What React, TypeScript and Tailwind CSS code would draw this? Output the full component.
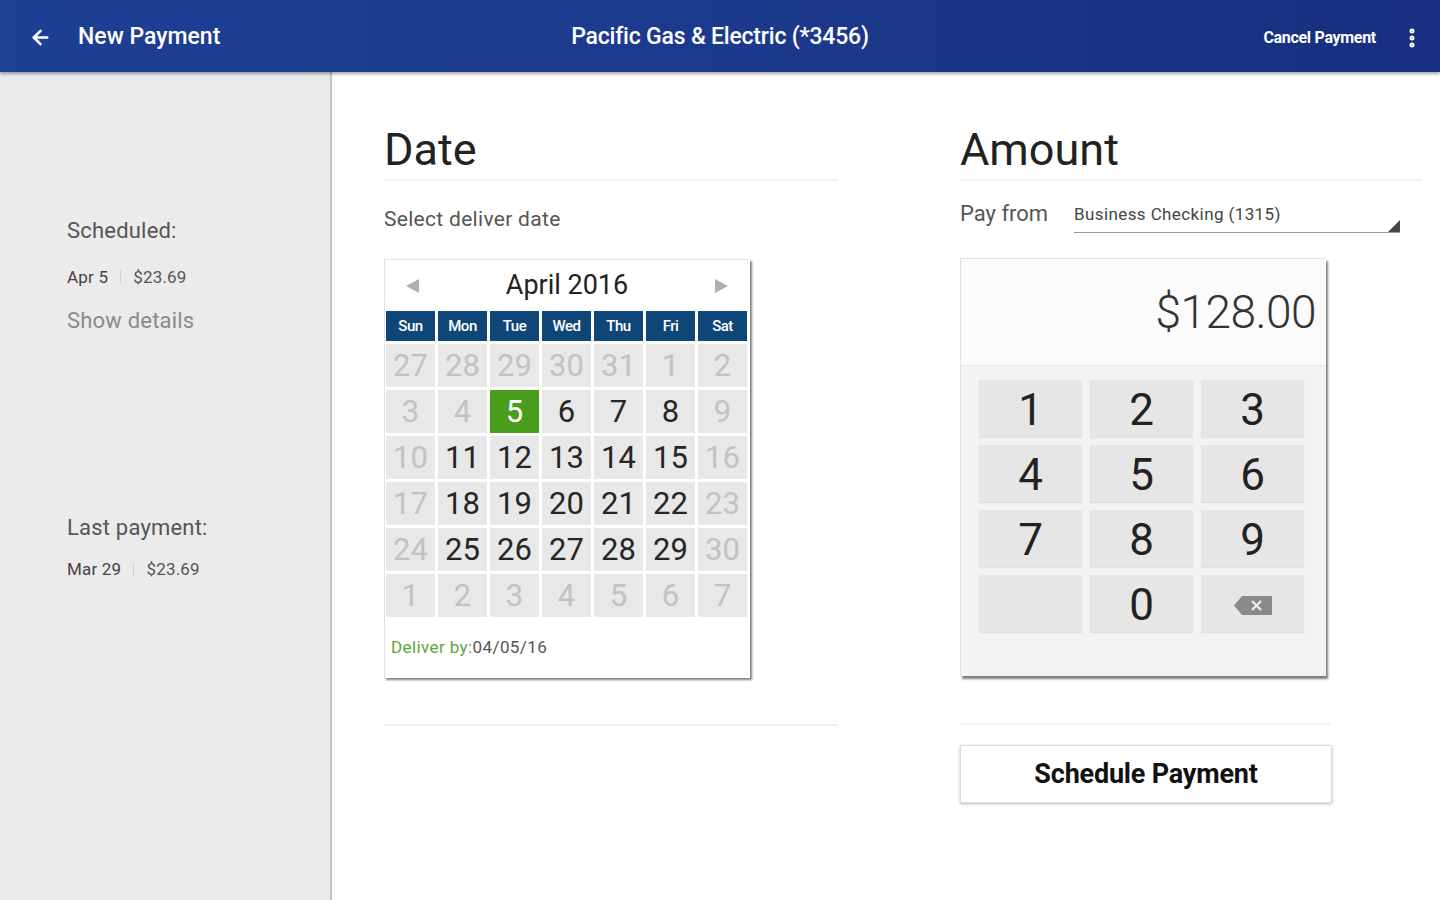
import React from "react";
import { ArrowLeft, EllipsisVertical } from "lucide-react";

const font = { fontFamily: "Roboto, 'Noto Sans', 'Liberation Sans', sans-serif" };

type Day = { n: number; on: boolean; sel?: boolean };

const rows: Day[][] = [
  [27, 28, 29, 30, 31, 1, 2].map((n) => ({ n, on: false })),
  [
    { n: 3, on: false },
    { n: 4, on: false },
    { n: 5, on: true, sel: true },
    { n: 6, on: true },
    { n: 7, on: true },
    { n: 8, on: true },
    { n: 9, on: false },
  ],
  [10, 11, 12, 13, 14, 15, 16].map((n, i) => ({ n, on: i > 0 && i < 6 })),
  [17, 18, 19, 20, 21, 22, 23].map((n, i) => ({ n, on: i > 0 && i < 6 })),
  [24, 25, 26, 27, 28, 29, 30].map((n, i) => ({ n, on: i > 0 && i < 6 })),
  [1, 2, 3, 4, 5, 6, 7].map((n) => ({ n, on: false })),
];

const dayNames = ["Sun", "Mon", "Tue", "Wed", "Thu", "Fri", "Sat"];

function Calendar() {
  return (
    <div className="mt-[26px] w-[366px] bg-white border-t border-l border-[#e2e2e2] shadow-[2px_2px_2px_rgba(0,0,0,0.5)] pl-[1px]">
      <div className="h-[51px] flex items-center justify-between pl-[20px] pr-[22px]">
        <svg width="13" height="14" viewBox="0 0 13 14">
          <polygon points="13,0 13,14 0,7" fill="#b0b0b0" />
        </svg>
        <span className="text-[27px] text-[#222] leading-none">April 2016</span>
        <svg width="13" height="14" viewBox="0 0 13 14">
          <polygon points="0,0 0,14 13,7" fill="#b0b0b0" />
        </svg>
      </div>
      <div className="grid grid-cols-[repeat(7,49px)] gap-[3px] w-[362px]">
        {dayNames.map((d) => (
          <div
            key={d}
            className="h-[30px] bg-[#0e4677] text-white text-[15px] font-medium flex items-center justify-center tracking-[-0.5px]"
          >
            {d}
          </div>
        ))}
      </div>
      <div className="grid grid-cols-[repeat(7,49px)] gap-[3px] w-[362px] mt-[3px]">
        {rows.flat().map((d, i) => (
          <div
            key={i}
            className={
              "h-[43px] flex items-center justify-center text-[31px] leading-none " +
              (d.sel
                ? "bg-[#4a9c1c] text-white"
                : d.on
                ? "bg-[#e8e8e8] text-[#262626]"
                : "bg-[#e8e8e8] text-[#c2c2c2]")
            }
          >
            {d.n}
          </div>
        ))}
      </div>
      <div className="pt-[20px] pb-[21px] pl-[5px] text-[17px] leading-[20px] tracking-[0.4px]">
        <span className="text-[#5aa83a]">Deliver by:</span>
        <span className="text-[#555]">04/05/16</span>
      </div>
    </div>
  );
}

function Backspace() {
  return (
    <svg width="38" height="19" viewBox="0 0 38 19">
      <polygon points="8,0 38,0 38,19 8,19 0,9.5" fill="#8a8a8a" />
      <path d="M18 5 L27 14 M27 5 L18 14" stroke="#f0f0f0" strokeWidth="2.2" />
    </svg>
  );
}

function Keypad() {
  const keys = ["1", "2", "3", "4", "5", "6", "7", "8", "9", "", "0", "bs"];
  return (
    <div className="mt-[25px] w-[366px] bg-[#f3f3f3] border-t border-l border-[#e2e2e2] shadow-[2px_3px_2px_rgba(0,0,0,0.5)]">
      <div className="h-[107px] bg-[#fbfbfb] border-b border-[#ececec] flex items-center justify-end pr-[10px]">
        <span className="text-[46px] font-light text-[#333] leading-none tracking-[-0.5px]">$128.00</span>
      </div>
      <div className="pt-[14px] pl-[18px] pr-[22px] pb-[44px] grid grid-cols-[repeat(3,103px)] gap-[8px]">
        {keys.map((k, i) => (
          <div
            key={i}
            className="h-[57px] pt-[3px] bg-[#e6e6e6] shadow-[0_1px_1px_rgba(0,0,0,0.08)] flex items-center justify-center text-[44px] text-[#222] leading-none"
          >
            {k === "bs" ? <Backspace /> : k}
          </div>
        ))}
      </div>
    </div>
  );
}

export default function App() {
  return (
    <div className="w-[1440px] h-[900px] flex flex-col bg-white overflow-hidden" style={font}>
      <header className="relative z-10 h-[72px] shrink-0 pt-[3px] bg-gradient-to-r from-[#1d3f94] via-[#1c3a8d] to-[#172f7e] shadow-[0_2px_3px_rgba(0,0,0,0.35)] grid grid-cols-[1fr_auto_1fr] items-center text-white">
        <div className="flex items-center pl-[29px]">
          <ArrowLeft size={23} strokeWidth={2.6} />
          <span className="ml-[26px] text-[23px] font-medium tracking-[0px]">New Payment</span>
        </div>
        <div className="text-[23px] font-medium tracking-[-0.2px]">Pacific Gas &amp; Electric (*3456)</div>
        <div className="flex items-center justify-end pr-[16px]">
          <span className="text-[16px] font-bold tracking-[-0.3px]">Cancel Payment</span>
          <span className="ml-[24px]">
            <EllipsisVertical size={24} strokeWidth={3} />
          </span>
        </div>
      </header>
      <div className="flex flex-1 min-h-0">
        <aside className="w-[332px] shrink-0 bg-[#ebebeb] border-r-2 border-[#c6c6c6] pl-[67px] pt-[145px]">
          <div className="text-[22px] leading-[28px] text-[#555] tracking-[0.2px]">Scheduled:</div>
          <div className="mt-[22px] text-[17px] leading-[20px] text-[#444] flex items-center tracking-[0.2px]">
            <span>Apr 5</span>
            <span className="mx-[12px] w-px h-[14px] bg-[#d0d0d0]" />
            <span className="text-[#555]">$23.69</span>
          </div>
          <div className="mt-[20px] text-[22px] leading-[28px] text-[#8a8a8a] tracking-[0.2px]">Show details</div>
          <div className="mt-[179px] text-[22px] leading-[28px] text-[#555] tracking-[0.2px]">Last payment:</div>
          <div className="mt-[17px] text-[17px] leading-[20px] text-[#444] flex items-center tracking-[0.2px]">
            <span>Mar 29</span>
            <span className="mx-[12px] w-px h-[14px] bg-[#d0d0d0]" />
            <span className="text-[#555]">$23.69</span>
          </div>
        </aside>
        <main className="flex-1 flex pl-[52px]">
          <section className="w-[454px] pt-[54px]">
            <h1 className="text-[45px] leading-[48px] text-[#222] pb-[5px] border-b-2 border-[#f0f0f0]">Date</h1>
            <p className="mt-[24px] text-[21px] leading-[28px] text-[#555] tracking-[0.3px]">Select deliver date</p>
            <Calendar />
            <div className="mt-[46px] border-t-2 border-[#f0f0f0]" />
          </section>
          <section className="ml-[122px] w-[462px] pt-[54px]">
            <h1 className="text-[45px] leading-[48px] text-[#222] pb-[5px] border-b-2 border-[#f0f0f0]">Amount</h1>
            <div className="mt-[19px] flex">
              <div className="w-[114px] text-[22px] leading-[28px] text-[#555]">Pay from</div>
              <div className="relative flex-1 mr-[22px] pt-[4px] pb-[8px] border-b border-[#9a9a9a] text-[17px] leading-[20px] text-[#444] tracking-[0.4px]">
                Business Checking (1315)
                <svg className="absolute right-0 bottom-0" width="12" height="12" viewBox="0 0 12 12">
                  <polygon points="12,0 12,12 0,12" fill="#444" />
                </svg>
              </div>
            </div>
            <Keypad />
            <div className="mt-[47px] w-[370px] border-t-2 border-[#f0f0f0]" />
            <button className="mt-[20px] w-[372px] h-[58px] bg-white border border-[#dcdcdc] shadow-[0_1px_3px_rgba(0,0,0,0.25)] text-[27px] font-bold text-[#111] tracking-[-0.2px]">
              Schedule Payment
            </button>
          </section>
        </main>
      </div>
    </div>
  );
}
